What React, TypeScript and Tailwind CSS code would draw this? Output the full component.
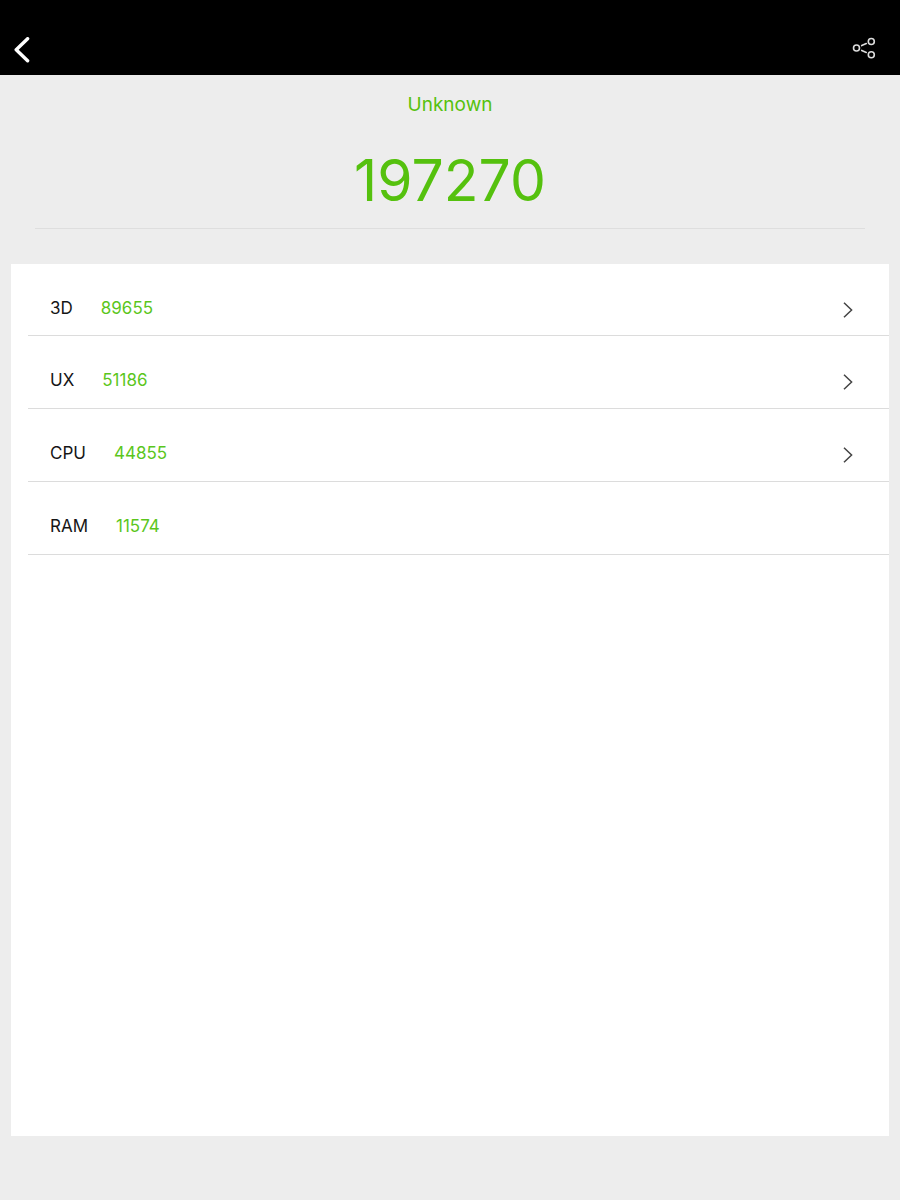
type Score = {
  label: string;
  value: number;
  hasDetails: boolean;
};

const SCORES: Score[] = [
  { label: "3D", value: 89655, hasDetails: true },
  { label: "UX", value: 51186, hasDetails: true },
  { label: "CPU", value: 44855, hasDetails: true },
  { label: "RAM", value: 11574, hasDetails: false },
];

function BackIcon() {
  return (
    <svg width="16" height="26" viewBox="0 0 16 26" fill="none" aria-hidden>
      <path
        d="M13.6 1.7 2.2 12.7l11.4 11"
        stroke="#fff"
        strokeWidth="3.4"
        strokeLinecap="round"
        strokeLinejoin="round"
      />
    </svg>
  );
}

function ShareIcon() {
  return (
    <svg width="24" height="22" viewBox="0 0 24 22" fill="none" aria-hidden>
      <g stroke="#dcdcdc" strokeWidth="1.6">
        <circle cx="4.5" cy="11" r="3" />
        <circle cx="19.3" cy="4.5" r="3" />
        <circle cx="19.3" cy="17.7" r="3" />
        <path d="m9.7 8.6 4.6-2.1M9.7 13.4l4.6 2.1" strokeLinecap="round" />
      </g>
    </svg>
  );
}

function ChevronIcon() {
  return (
    <svg width="10" height="16" viewBox="0 0 10 16" fill="none" aria-hidden>
      <path d="m1 .7 7.6 7.3L1 15.3" stroke="#444" strokeWidth="1.5" />
    </svg>
  );
}

function ScoreRow({ label, value, hasDetails }: Score) {
  const content = (
    <>
      <span className="flex gap-7">
        <span className="text-[#161616]">{label}</span>
        <span className="text-[#5bc61c]">{value}</span>
      </span>
      {hasDetails && (
        <span className="pt-1">
          <ChevronIcon />
        </span>
      )}
    </>
  );

  return (
    <li className="flex h-[73px] border-b border-[#dcdcdc] first:h-[72px]">
      {hasDetails ? (
        <button
          type="button"
          className="flex w-full items-center justify-between pt-4 pr-9 pl-[22px]"
        >
          {content}
        </button>
      ) : (
        <div className="flex w-full items-center pt-4 pr-9 pl-[22px]">
          {content}
        </div>
      )}
    </li>
  );
}

export default function App() {
  return (
    <div className="flex min-h-screen flex-col bg-[#ededed] font-['Inter','Liberation_Sans',sans-serif]">
      <header className="flex h-[75px] items-end justify-between bg-black pr-6 pb-3 pl-[14px]">
        <button type="button" aria-label="Back">
          <BackIcon />
        </button>
        <button type="button" aria-label="Share" className="pb-1">
          <ShareIcon />
        </button>
      </header>

      <main className="flex flex-1 flex-col px-[11px] pb-16">
        <section className="mx-6 border-b border-[#dedede] pt-4 text-center text-[#55c10e]">
          <h1 className="text-[19px] leading-7">Unknown</h1>
          <p className="pt-[30px] pb-[15px] text-[57px] leading-16">197270</p>
        </section>

        <section className="mt-[35px] flex-1 bg-white">
          <ul className="ml-[17px] text-[17px] leading-6">
            {SCORES.map((score) => (
              <ScoreRow key={score.label} {...score} />
            ))}
          </ul>
        </section>
      </main>
    </div>
  );
}
